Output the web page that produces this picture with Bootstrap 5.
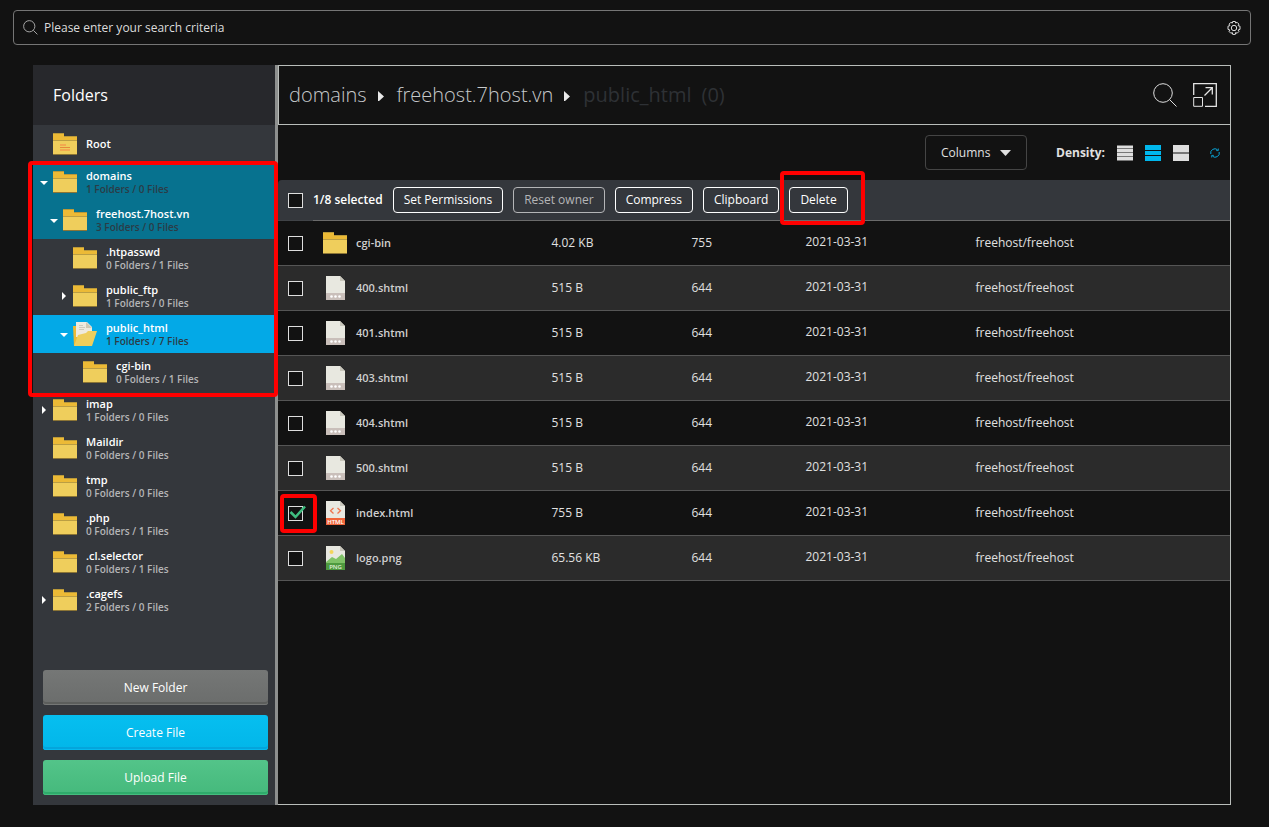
<!DOCTYPE html>
<html lang="en" data-bs-theme="dark">
<head>
<meta charset="utf-8">
<meta name="viewport" content="width=device-width, initial-scale=1">
<title>File Manager</title>
<link rel="stylesheet" href="https://cdn.jsdelivr.net/npm/bootstrap@5.3.0/dist/css/bootstrap.min.css">
<style>
  body { background: #121212; color: #e0e0e0; font: 400 12px/16px "Open Sans", sans-serif; }
  .page { padding: 10px 18px 0 13px; }
  .search-box { height: 35px; border: 1px solid #757575; border-radius: 4px; padding: 0 8px 0 9px; }
  .search-box input { background: none; border: 0; outline: 0; color: #e0e0e0; font-size: 12px; padding: 0 6px; }
  .search-box input::placeholder { color: #dcdcdc; opacity: 1; }
  .plain-btn { background: none; border: 0; padding: 0; line-height: 0; color: #e0e0e0; }
  .manager { margin: 20px 20px 0; min-height: calc(100vh - 87px); }

  .sidebar { width: 245px; background: #34373c; border-right: 3px solid #8e908f; }
  .sidebar-title { height: 60px; background: #27282c; color: #fff; font-size: 16px; line-height: 20px; padding: 0 20px; font-weight: 400; }
  .tree-item { height: 38px; color: #fff; text-decoration: none; padding-left: 6px; }
  .tree-item.open-path { background: #07728f; }
  .tree-item.current { background: #03a9e7; }
  .lvl-1 { padding-left: 16px; } .lvl-2 { padding-left: 26px; } .lvl-3 { padding-left: 36px; }
  .tree-item .toggle { width: 10px; height: 10px; margin-right: 4px; }
  .tree-item .pic { width: 24px; height: 26px; margin-right: 9px; }
  .tree-name { font-size: 11px; font-weight: 600; line-height: 14px; display: block; }
  .tree-info { font-size: 10px; font-weight: 600; line-height: 12px; display: block; color: #b4b5b7; }
  .open-path .tree-info, .current .tree-info { color: #2b3c46; }
  .side-actions { padding: 0 7px 10px 10px; gap: 10px; }
  .side-actions .btn { height: 35px; font-size: 12px; line-height: 16px; color: #fff; border: 0; border-radius: 3px; padding: 0; }
  .btn-folder { background: linear-gradient(#757776, #6b6d6c); box-shadow: inset 0 -1px #757776, inset 0 -3px #5c5e5c; }
  .btn-create { background: linear-gradient(#06bff0, #02b6e9); box-shadow: inset 0 -1px #06b9ee, inset 0 -3px #04a5dc; }
  .btn-upload { background: linear-gradient(#53c489, #45b97c); box-shadow: inset 0 -1px #45bd7e, inset 0 -3px #2fab6b; }

  .content { border: solid #b9bdba; border-width: 0 1px 1px 0; }
  .path-bar { height: 60px; border: solid #b9bdba; border-width: 1px 0 1px 1px; padding: 0 13px 0 10px; }
  .path-steps { gap: 10px; }
  .path-bar a, .path-end { font-size: 20px; font-weight: 300; line-height: 28px; color: #c6c9cb; text-decoration: none; }
  .path-bar .path-end { font-weight: 400; color: #2e3135; }
  .tool-bar { height: 55px; padding: 0 10px; }
  .btn-columns { width: 102px; height: 35px; border: 1px solid #454545; border-radius: 4px; color: #e0e0e0; font-size: 12px; line-height: 16px; padding: 0 15px; }
  .density-label { margin: 0 12px 0 29px; }
  .density { gap: 12px; }
  .refresh { margin: 0 0 0 21px; }

  .files { table-layout: fixed; width: 100%; border-collapse: separate; border-spacing: 0; }
  .files td { height: 45px; padding: 0 10px; border-bottom: 1px solid #555; color: #e0e0e0; }
  .files tbody tr:nth-child(even) { background: #2b2b2b; }
  .files th { height: 41px; padding: 0; background: #34373c; border-bottom: 1px solid #6a6a6a; font-weight: 400; }
  .files th:first-child { border-bottom-color: #404347; border-top-left-radius: 4px; }
  .files .pick { padding: 0 0 0 10px; }
  .files .date { padding-bottom: 2px; }
  .col-pick { width: 35px; } .col-name { width: 24%; } .col-size { width: 140px; } .col-perm { width: 114px; } .col-date { width: 170px; }
  .tick { appearance: none; width: 15px; height: 15px; margin: 0; border: 1px solid #dedede; background: #121212; display: block; }
  .file-pic { width: 24px; height: 26px; margin-right: 9px; flex: none; }
  .file-name { font-weight: 600; font-size: 11px; color: #cfcfcf; }
  .act-row { gap: 10px; }
  .act-count { color: #fff; font-weight: 600; }
  .btn-act { height: 26px; border: 1px solid #fff; border-radius: 4px; color: #fff; font-size: 12px; line-height: 16px; padding: 0 10px; }
  .btn-act:disabled { border-color: #b4b5b7; color: #b4b5b7; opacity: 1; }
  .hilite { position: absolute; border: 4px solid #f00; border-radius: 4px; pointer-events: none; z-index: 2; }
  .hilite-tree { inset: -2px -3px -6px -5px; }
  .hilite-btn { inset: -16px -17px -12px -9px; }
  .hilite-tick { inset: -12px -4px -12px -8px; }
  .tick-mark { position: absolute; left: 1px; top: -1px; pointer-events: none; }
</style>
</head>
<body>
<svg width="0" height="0" class="position-absolute" aria-hidden="true">
  <symbol id="folder" viewBox="0 0 24 26">
    <path fill="#ecba36" d="M0 2h11v3h13v5H0z"/><path fill="#efce5c" d="M0 9h24v15H0z"/>
    <path fill="#a98d3b" d="M0 2h11v1H0zM11 5h13v1H11zM0 9h24v1H0z" opacity=".75"/><path fill="#8b7435" d="M0 23h24v1H0z"/>
  </symbol>
  <symbol id="folder-root" viewBox="0 0 24 26">
    <use href="#folder"/><path fill="#f3a951" d="M7 13h6v2H7zM7 18h10v2H7z"/><path fill="#e58a3c" d="M7 16h10v1H7z"/>
  </symbol>
  <symbol id="folder-open" viewBox="0 0 24 26">
    <path fill="#ecba36" d="M0 5h11v18L1 25z"/><path fill="#efeade" d="M3 1h11l5 5v10H3z"/><path fill="#d0c8b2" d="M13 1l6 6h-6z"/>
    <path stroke="#cfcabc" d="M6 4.500h4M6 6.500h6M6 8.500h5"/>
    <path fill="#efce5c" d="M5 14l8-2 2-2h9l-5 15H1z"/>
  </symbol>
  <symbol id="file" viewBox="0 0 24 26">
    <path fill="#e8e8e0" d="M3 1h14l5 5v13H3z"/><path fill="#c9c7bc" d="M17 1v5h5z"/><path fill="#c9bfba" d="M3 18h19v7H3z"/>
    <g fill="#fff"><circle cx="8.500" cy="21.500" r="1.300"/><circle cx="12.500" cy="21.500" r="1.300"/><circle cx="16.500" cy="21.500" r="1.300"/></g>
  </symbol>
  <symbol id="right" viewBox="0 0 10 10"><path fill="#fff" d="M3 1l4 4-4 4z"/></symbol>
  <symbol id="down" viewBox="0 0 10 10"><path fill="#fff" d="M1 4h8L5 8z"/></symbol>
  <symbol id="lens" viewBox="0 0 24 24"><g fill="none" stroke="currentColor"><circle cx="10" cy="10" r="9.300"/><path d="M16.500 16.500L23.500 23.500"/></g></symbol>
</svg>

<div class="page">
  <div class="search-box d-flex align-items-center">
    <svg width="15" height="15" viewBox="0 0 24 24" fill="none" stroke="#a5a5a5" stroke-width="1.600" aria-hidden="true"><circle cx="10" cy="10" r="9"/><path d="M16.500 16.500L23 23"/></svg>
    <input type="search" class="flex-grow-1" aria-label="Search" placeholder="Please enter your search criteria">
    <button class="plain-btn" type="button" aria-label="Search settings">
      <svg width="16" height="16" viewBox="0 0 16 16" fill="none" stroke="currentColor"><circle cx="8" cy="8" r="2.700"/><path d="M6.700 1.500h2.600l.4 1.600 1.400-.8 1.800 1.800-.8 1.500 1.900.6v3.200l-1.900.6.8 1.500-1.800 1.800-1.400-.8-.4 1.900H6.700l-.4-1.900-1.400.8-1.800-1.800.8-1.500-1.900-.6V6.200l1.900-.6-.8-1.500 1.800-1.800 1.400.8z"/></svg>
    </button>
  </div>

  <div class="manager d-flex">
    <aside class="sidebar d-flex flex-column flex-shrink-0">
      <h2 class="sidebar-title d-flex align-items-center mb-0">Folders</h2>
      <nav class="flex-grow-1 pb-3" aria-label="Folders">
        <a href="#" class="tree-item d-flex align-items-center"><svg class="toggle"></svg><svg class="pic"><use href="#folder-root"/></svg><span class="tree-name">Root</span></a>
        <div class="position-relative">
          <a href="#" class="tree-item open-path d-flex align-items-center"><svg class="toggle"><use href="#down"/></svg><svg class="pic"><use href="#folder"/></svg><span><span class="tree-name">domains</span><span class="tree-info">1 Folders / 0 Files</span></span></a>
          <a href="#" class="tree-item open-path lvl-1 d-flex align-items-center"><svg class="toggle"><use href="#down"/></svg><svg class="pic"><use href="#folder"/></svg><span><span class="tree-name">freehost.7host.vn</span><span class="tree-info">3 Folders / 0 Files</span></span></a>
          <a href="#" class="tree-item lvl-2 d-flex align-items-center"><svg class="toggle"></svg><svg class="pic"><use href="#folder"/></svg><span><span class="tree-name">.htpasswd</span><span class="tree-info">0 Folders / 1 Files</span></span></a>
          <a href="#" class="tree-item lvl-2 d-flex align-items-center"><svg class="toggle"><use href="#right"/></svg><svg class="pic"><use href="#folder"/></svg><span><span class="tree-name">public_ftp</span><span class="tree-info">1 Folders / 0 Files</span></span></a>
          <a href="#" class="tree-item current lvl-2 d-flex align-items-center"><svg class="toggle"><use href="#down"/></svg><svg class="pic"><use href="#folder-open"/></svg><span><span class="tree-name">public_html</span><span class="tree-info">1 Folders / 7 Files</span></span></a>
          <a href="#" class="tree-item lvl-3 d-flex align-items-center"><svg class="toggle"></svg><svg class="pic"><use href="#folder"/></svg><span><span class="tree-name">cgi-bin</span><span class="tree-info">0 Folders / 1 Files</span></span></a>
          <div class="hilite hilite-tree"></div>
        </div>
        <a href="#" class="tree-item d-flex align-items-center"><svg class="toggle"><use href="#right"/></svg><svg class="pic"><use href="#folder"/></svg><span><span class="tree-name">imap</span><span class="tree-info">1 Folders / 0 Files</span></span></a>
        <a href="#" class="tree-item d-flex align-items-center"><svg class="toggle"></svg><svg class="pic"><use href="#folder"/></svg><span><span class="tree-name">Maildir</span><span class="tree-info">0 Folders / 0 Files</span></span></a>
        <a href="#" class="tree-item d-flex align-items-center"><svg class="toggle"></svg><svg class="pic"><use href="#folder"/></svg><span><span class="tree-name">tmp</span><span class="tree-info">0 Folders / 0 Files</span></span></a>
        <a href="#" class="tree-item d-flex align-items-center"><svg class="toggle"></svg><svg class="pic"><use href="#folder"/></svg><span><span class="tree-name">.php</span><span class="tree-info">0 Folders / 1 Files</span></span></a>
        <a href="#" class="tree-item d-flex align-items-center"><svg class="toggle"></svg><svg class="pic"><use href="#folder"/></svg><span><span class="tree-name">.cl.selector</span><span class="tree-info">0 Folders / 1 Files</span></span></a>
        <a href="#" class="tree-item d-flex align-items-center"><svg class="toggle"><use href="#right"/></svg><svg class="pic"><use href="#folder"/></svg><span><span class="tree-name">.cagefs</span><span class="tree-info">2 Folders / 0 Files</span></span></a>
      </nav>
      <div class="side-actions d-grid">
        <button type="button" class="btn btn-folder">New Folder</button>
        <button type="button" class="btn btn-create">Create File</button>
        <button type="button" class="btn btn-upload">Upload File</button>
      </div>
    </aside>

    <main class="content flex-grow-1">
      <header class="path-bar d-flex align-items-center justify-content-between">
        <div class="d-flex align-items-center path-steps">
          <a href="#">domains</a>
          <svg width="10" height="12" viewBox="0 0 10 12"><path fill="#e8e8e8" d="M1 2l6 5.500L1 13z"/></svg>
          <a href="#">freehost.7host.vn</a>
          <svg width="10" height="12" viewBox="0 0 10 12"><path fill="#e8e8e8" d="M1 2l6 5.500L1 13z"/></svg>
          <span class="path-end">public_html</span>
          <span class="path-end">(0)</span>
        </div>
        <div class="d-flex align-items-center gap-3">
          <button class="plain-btn" type="button" aria-label="Search files"><svg width="24" height="24"><use href="#lens"/></svg></button>
          <button class="plain-btn" type="button" aria-label="Full screen"><svg width="24" height="24" viewBox="0 0 24 24" fill="none" stroke="#e4e4e4"><path stroke-width="1.300" d="M.7 12V.7h22.600v22.600H12"/><path d="M.7 14.500h8.800v8.800H.7z"/><path stroke-width="1.300" d="M11.500 12.500L19 5M12.500 4.700h6.800v6.800"/></svg></button>
        </div>
      </header>

      <div class="tool-bar d-flex align-items-center justify-content-end">
        <button type="button" class="btn btn-columns d-flex align-items-center justify-content-between">Columns <svg width="11" height="6" viewBox="0 0 11 6"><path fill="#e0e0e0" d="M0 0h11L5.500 6z"/></svg></button>
        <span class="density-label fw-bold">Density:</span>
        <div class="density d-flex">
          <button class="plain-btn" type="button" aria-label="Compact"><svg width="16" height="16" fill="#dedede"><path fill="#777" d="M0 0h16v16H0z"/><path d="M0 1h16v2H0zM0 4h16v3H0zM0 8h16v3H0zM0 12h16v3H0z"/></svg></button>
          <button class="plain-btn" type="button" aria-label="Normal"><svg width="16" height="16" fill="#00b7ec"><path d="M0 0h16v5H0zM0 6h16v4H0zM0 11h16v5H0z"/></svg></button>
          <button class="plain-btn" type="button" aria-label="Spacious"><svg width="16" height="16" fill="#dedede"><path fill="#777" d="M0 7h16v2H0z"/><path d="M0 0h16v7H0zM0 9h16v7H0z"/></svg></button>
        </div>
        <button class="plain-btn refresh" type="button" aria-label="Refresh"><svg width="10" height="10" viewBox="0 0 10 10" fill="none" stroke="#0aa5d8"><path d="M.8 6A4.200 4.200 0 0 1 7.500 1.700M9.200 4A4.200 4.200 0 0 1 2.500 8.300"/><path stroke-width=".9" d="M6.200 2.600h2.100V.5M3.800 7.400H1.700v2.100"/></svg></button>
      </div>

      <table class="files">
        <colgroup><col class="col-pick"><col class="col-name"><col class="col-size"><col class="col-perm"><col class="col-date"><col></colgroup>
        <thead>
          <tr>
            <th class="pick"><input type="checkbox" class="tick" aria-label="Select all"></th>
            <th colspan="5">
              <div class="d-flex align-items-center act-row">
                <span class="act-count">1/8 selected</span>
                <button type="button" class="btn btn-act">Set Permissions</button>
                <button type="button" class="btn btn-act" disabled>Reset owner</button>
                <button type="button" class="btn btn-act">Compress</button>
                <button type="button" class="btn btn-act">Clipboard</button>
                <div class="position-relative d-flex"><button type="button" class="btn btn-act">Delete</button><div class="hilite hilite-btn"></div></div>
              </div>
            </th>
          </tr>
        </thead>
        <tbody>
          <tr><td class="pick"><input type="checkbox" class="tick" aria-label="cgi-bin"></td><td><div class="d-flex align-items-center"><svg class="file-pic"><use href="#folder"/></svg><span class="file-name">cgi-bin</span></div></td><td>4.02 KB</td><td>755</td><td class="date">2021-03-31</td><td>freehost/freehost</td></tr>
          <tr><td class="pick"><input type="checkbox" class="tick" aria-label="400.shtml"></td><td><div class="d-flex align-items-center"><svg class="file-pic"><use href="#file"/></svg><span class="file-name">400.shtml</span></div></td><td>515 B</td><td>644</td><td class="date">2021-03-31</td><td>freehost/freehost</td></tr>
          <tr><td class="pick"><input type="checkbox" class="tick" aria-label="401.shtml"></td><td><div class="d-flex align-items-center"><svg class="file-pic"><use href="#file"/></svg><span class="file-name">401.shtml</span></div></td><td>515 B</td><td>644</td><td class="date">2021-03-31</td><td>freehost/freehost</td></tr>
          <tr><td class="pick"><input type="checkbox" class="tick" aria-label="403.shtml"></td><td><div class="d-flex align-items-center"><svg class="file-pic"><use href="#file"/></svg><span class="file-name">403.shtml</span></div></td><td>515 B</td><td>644</td><td class="date">2021-03-31</td><td>freehost/freehost</td></tr>
          <tr><td class="pick"><input type="checkbox" class="tick" aria-label="404.shtml"></td><td><div class="d-flex align-items-center"><svg class="file-pic"><use href="#file"/></svg><span class="file-name">404.shtml</span></div></td><td>515 B</td><td>644</td><td class="date">2021-03-31</td><td>freehost/freehost</td></tr>
          <tr><td class="pick"><input type="checkbox" class="tick" aria-label="500.shtml"></td><td><div class="d-flex align-items-center"><svg class="file-pic"><use href="#file"/></svg><span class="file-name">500.shtml</span></div></td><td>515 B</td><td>644</td><td class="date">2021-03-31</td><td>freehost/freehost</td></tr>
          <tr><td class="pick"><div class="position-relative"><input type="checkbox" class="tick" aria-label="index.html" checked><svg class="tick-mark" width="18" height="15" viewBox="0 0 18 15" fill="none" stroke="#3fbd80" stroke-width="2.500"><path d="M1.500 7l5 5L16 1.500"/></svg><div class="hilite hilite-tick"></div></div></td><td><div class="d-flex align-items-center"><svg class="file-pic" viewBox="0 0 24 26"><path fill="#e8e8e0" d="M3 1h14l5 5v13H3z"/><path fill="#c9c7bc" d="M17 1v5h5z"/><path fill="#f0653a" d="M3 18h19v7H3z"/><path fill="none" stroke="#f0754e" stroke-width="1.300" d="M10.500 8L7.500 10.800l3 2.800M14.500 8l3 2.800-3 2.800"/><text x="12.500" y="24" font-size="6" font-weight="600" text-anchor="middle" fill="#fff">HTML</text></svg><span class="file-name">index.html</span></div></td><td>755 B</td><td>644</td><td class="date">2021-03-31</td><td>freehost/freehost</td></tr>
          <tr><td class="pick"><input type="checkbox" class="tick" aria-label="logo.png"></td><td><div class="d-flex align-items-center"><svg class="file-pic" viewBox="0 0 24 26"><path fill="#e8e8e0" d="M3 1h14l5 5v13H3z"/><path fill="#c9c7bc" d="M17 1v5h5z"/><circle cx="8.500" cy="7" r="2" fill="#f3d55b"/><path fill="#7fc267" d="M3 17l6-5 4 2 6-5 3 4v5H3z"/><path fill="#4e9a3f" d="M3 18h19v7H3z"/><text x="12.500" y="24" font-size="6" font-weight="600" text-anchor="middle" fill="#e4f1df">PNG</text></svg><span class="file-name">logo.png</span></div></td><td>65.56 KB</td><td>644</td><td class="date">2021-03-31</td><td>freehost/freehost</td></tr>
        </tbody>
      </table>
    </main>
  </div>
</div>
<script src="https://cdn.jsdelivr.net/npm/bootstrap@5.3.0/dist/js/bootstrap.bundle.min.js"></script>
</body>
</html>
